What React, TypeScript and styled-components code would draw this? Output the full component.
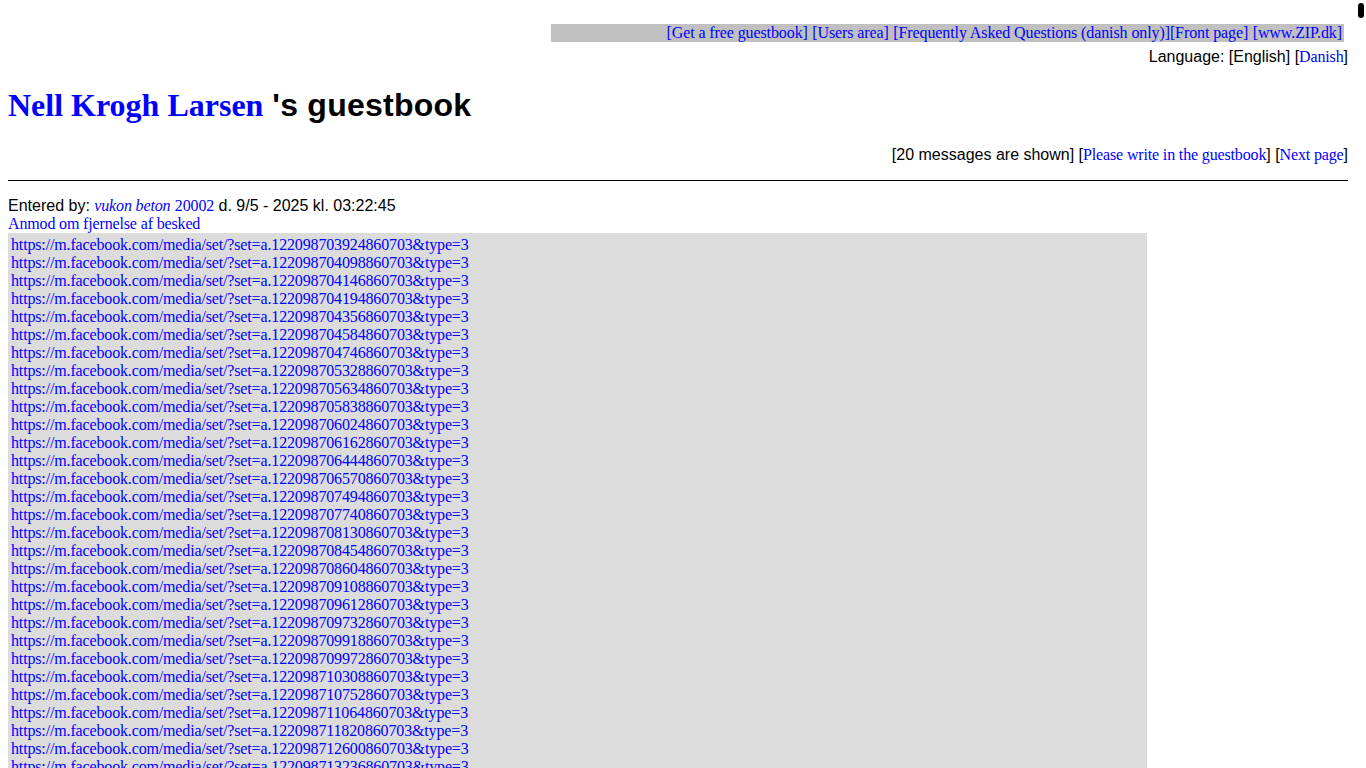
import React from "react";
import styled, { createGlobalStyle } from "styled-components";

const GlobalStyle = createGlobalStyle`
  html {
    overflow: hidden;
  }
  body {
    margin: 8px;
    background: #ffffff;
    color: #000000;
    font-family: "Liberation Sans", Arial, sans-serif;
    font-size: 16px;
  }
`;

const serif = `"Liberation Serif", "Times New Roman", serif`;

const mediaIds = [
  "122098703924860703",
  "122098704098860703",
  "122098704146860703",
  "122098704194860703",
  "122098704356860703",
  "122098704584860703",
  "122098704746860703",
  "122098705328860703",
  "122098705634860703",
  "122098705838860703",
  "122098706024860703",
  "122098706162860703",
  "122098706444860703",
  "122098706570860703",
  "122098707494860703",
  "122098707740860703",
  "122098708130860703",
  "122098708454860703",
  "122098708604860703",
  "122098709108860703",
  "122098709612860703",
  "122098709732860703",
  "122098709918860703",
  "122098709972860703",
  "122098710308860703",
  "122098710752860703",
  "122098711064860703",
  "122098711820860703",
  "122098712600860703",
  "122098713236860703",
  "122098713578860703",
  "122098713902860703",
];

const App = () => {
  return (
    <>
      <GlobalStyle />
      <Page>
        <TopRow>
          <TopBar>
            <NavLink href="#">[Get a free guestbook]</NavLink>{" "}
            <NavLink href="#">[Users area]</NavLink>{" "}
            <NavLink href="#">[Frequently Asked Questions (danish only)]</NavLink>
            <NavLink href="#">[Front page]</NavLink>{" "}
            <NavLink href="#">[www.ZIP.dk]</NavLink>
          </TopBar>
        </TopRow>

        <Language>
          Language: [English] [<Link href="#">Danish</Link>]
        </Language>

        <Title>
          <TitleLink href="#">Nell Krogh Larsen</TitleLink> <TitleRest>'s guestbook</TitleRest>
        </Title>

        <Status>
          [20 messages are shown] [<Link href="#">Please write in the guestbook</Link>] [
          <Link href="#">Next page</Link>]
        </Status>

        <Rule />

        <Entry>
          <EntryMeta>
            Entered by: <Link href="#" $italic>vukon beton</Link>{" "}
            <Link href="#">20002</Link> d. 9/5 - 2025 kl. 03:22:45
          </EntryMeta>
          <RemovalLink href="#">Anmod om fjernelse af besked</RemovalLink>
          <MessageBox>
            {mediaIds.map((id) => (
              <MessageLine key={id}>
                <Link href="#">
                  https://m.facebook.com/media/set/?set=a.{id}&amp;type=3
                </Link>
              </MessageLine>
            ))}
          </MessageBox>
        </Entry>
      </Page>
      <ScrollThumb />
    </>
  );
};

export default App;

const Page = styled.div`
  width: 1340px;
`;

const Link = styled.a<{ $italic?: boolean }>`
  font-family: ${serif};
  font-style: ${({ $italic }) => ($italic ? "italic" : "normal")};
  letter-spacing: -0.15px;
  color: #0000ff;
  text-decoration: none;
`;

const NavLink = styled(Link)`
  letter-spacing: -0.1px;
`;

const TopRow = styled.div`
  display: flex;
  justify-content: flex-end;
  margin-top: 16px;
  padding-right: 4px;
`;

const TopBar = styled.div`
  width: 793px;
  height: 18px;
  line-height: 18px;
  background: #c0c0c0;
  text-align: right;
  padding-right: 2px;
  box-sizing: border-box;
  white-space: nowrap;
`;

const Language = styled.div`
  margin-top: 6px;
  line-height: 18px;
  text-align: right;
`;

const Title = styled.h1`
  margin: 21px 0 0;
  font-size: 32px;
  font-weight: bold;
  line-height: 37px;
`;

const TitleLink = styled(Link)`
  font-weight: bold;
  letter-spacing: 0;
`;

const TitleRest = styled.span`
  letter-spacing: 0.25px;
`;

const Status = styled.div`
  margin-top: 22px;
  line-height: 18px;
  text-align: right;
`;

const Rule = styled.hr`
  margin: 16px 0 0;
  border: 0;
  border-top: 1px solid #000000;
  height: 0;
`;

const Entry = styled.div`
  margin-top: 16px;
  display: flex;
  flex-direction: column;
  align-items: flex-start;
`;

const EntryMeta = styled.div`
  line-height: 18px;
`;

const RemovalLink = styled(Link)`
  line-height: 18px;
`;

const MessageBox = styled.div`
  width: 1139px;
  box-sizing: border-box;
  padding: 3px;
  background: #dcdcdc;
`;

const MessageLine = styled.div`
  line-height: 18px;
`;

const ScrollThumb = styled.div`
  position: fixed;
  top: 3px;
  right: 2px;
  width: 6px;
  height: 15px;
  border-radius: 3px;
  background: #000000;
`;
